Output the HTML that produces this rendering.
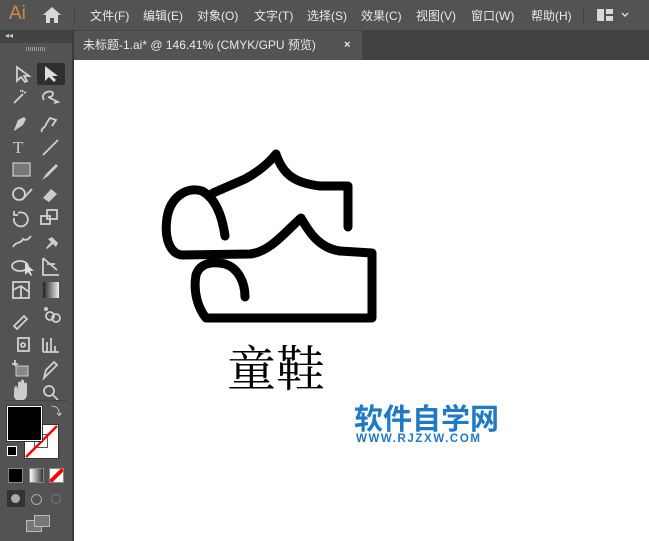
<!DOCTYPE html><html><head><meta charset="utf-8"><style>
body{margin:0;width:649px;height:541px;overflow:hidden;background:#fff;font-family:"Liberation Sans","Noto Sans CJK SC",sans-serif;position:relative}
.a{position:absolute}
#top{left:0;top:0;width:649px;height:30px;background:#535353}
.m{top:7px;color:#e8e8e8;font-size:12px}
#strip{left:0;top:30px;width:649px;height:30px;background:#424242}
#tab{left:74px;top:31px;width:288px;height:29px;background:#535353;color:#e8e8e8;font-size:12px;line-height:29px}
#panel{left:0;top:30px;width:72px;height:511px;background:#535353;border-right:2px solid #3a3a3a}
#ph{left:0;top:30px;width:72px;height:13px;background:#434343}
.ic{fill:none;stroke:#d0d0d0;stroke-width:1.8}
</style></head><body>
<div class="a" id="top"></div>
<div class="a" style="left:9px;top:3px;color:#d08a4a;font-size:19px">Ai</div>
<svg class="a" style="left:42px;top:6px" width="20" height="18"><path d="M10 1L1 9h3v8h4v-5h4v5h4V9h3z" fill="#d8d8d8"/></svg>
<div class="a" style="left:74px;top:6px;width:1px;height:18px;background:#444"></div>
<div class="a m" style="left:90px">文件(F)</div><div class="a m" style="left:143px">编辑(E)</div><div class="a m" style="left:197px">对象(O)</div><div class="a m" style="left:254px">文字(T)</div><div class="a m" style="left:307px">选择(S)</div><div class="a m" style="left:361px">效果(C)</div><div class="a m" style="left:416px">视图(V)</div><div class="a m" style="left:471px">窗口(W)</div><div class="a m" style="left:531px">帮助(H)</div>
<div class="a" style="left:583px;top:6px;width:1px;height:18px;background:#444"></div>
<svg class="a" style="left:597px;top:8px" width="40" height="14"><rect x="0" y="1" width="7" height="12" fill="#d8d8d8"/><rect x="9" y="1" width="7" height="5" fill="#d8d8d8"/><rect x="9" y="8" width="7" height="5" fill="#d8d8d8"/><path d="M25 5l3 3 3-3" stroke="#d8d8d8" fill="none" stroke-width="1.5"/></svg>
<div class="a" id="strip"></div>
<div class="a" id="tab"><span style="margin-left:9px">未标题-1.ai* @ 146.41% (CMYK/GPU 预览)</span><span class="a" style="left:270px;top:0;font-weight:bold;font-size:11px">×</span></div>
<div class="a" id="panel"></div>
<div class="a" id="ph"><span style="color:#ccc;font-size:8px;position:absolute;left:5px;top:1px">◂◂</span></div>
<div class="a" style="left:26px;top:47px;width:19px;height:4px;background:repeating-linear-gradient(90deg,#999 0 1px,transparent 1px 2px)"></div>
<div class="a" style="left:37px;top:63px;width:28px;height:22px;background:#2f2f2f;border-radius:2px"></div>
<svg class="a" style="left:0;top:60px" width="72" height="400">
<path class="ic" d="M17 7v14l4-4 4 5 2-1-3-5h5z"/><path d="M45 6v15l4-4 5 5 2-2-4-4h6z" fill="#ddd"/>
<path class="ic" d="M14 43l9-9M22 30l1 2M26 32l-2 1M20 31l1 0"/><path class="ic" d="M44 40c-4-6 4-10 8-8 3 2-1 6-4 5l10 5-4 1"/>
<path d="M14 70l4-10 6-3 2 2-3 6-9 6z" fill="#ccc"/><path class="ic" d="M42 72c-2-4 4-4 4-8l4-6 6 2-4 6"/>
<text x="13" y="93" fill="#ccc" font-size="17" font-family="Liberation Serif">T</text><path class="ic" d="M43 95l15-15"/>
<rect x="13" y="103" width="17" height="13" fill="#777" stroke="#ccc" stroke-width="1.2"/><path d="M42 120l4-6 10-10 2 2-10 10z" fill="#ccc"/>
<circle cx="19" cy="134" r="6" class="ic"/><path class="ic" d="M22 140l10-11"/><path d="M43 138l8-9 6 5-8 8z" fill="#ccc"/>
<path class="ic" d="M14 158a7 7 0 1 0 4-5M14 151v4h4"/><rect x="41" y="156" width="9" height="8" class="ic"/><rect x="47" y="150" width="10" height="9" class="ic"/>
<path class="ic" d="M13 187c3-6 8-3 10-8 3 2 6 0 8-3"/><path d="M46 188l5-6-3-3 4-2 6 6-2 4-3-3-6 5z" fill="#ccc"/>
<ellipse cx="20" cy="206" rx="8" ry="5" class="ic"/><path d="M25 203v12l3-3 3 4 1-1-2-4h4z" fill="#ddd"/><path class="ic" d="M43 198v17h16M43 198l14 12M47 204h8"/>
<rect x="13" y="222" width="16" height="16" class="ic"/><path class="ic" d="M13 230l8-4 8 6M21 226v12"/><rect x="43" y="222" width="16" height="16" fill="url(#g)"/>
<path class="ic" d="M14 266l10-10 3 3-10 10z"/><circle cx="46" cy="249" r="2" fill="#ccc"/><circle cx="50" cy="256" r="4" class="ic"/><circle cx="56" cy="258" r="4" class="ic"/>
<rect x="18" y="278" width="11" height="13" class="ic"/><circle cx="23" cy="285" r="2" class="ic"/><path class="ic" d="M43 292v-14M47 292v-10M51 292v-14M55 292v-6M43 292h16"/>
<rect x="16" y="306" width="12" height="10" fill="#888" stroke="#ccc"/><path class="ic" d="M12 304h6M15 300v6"/><path class="ic" d="M44 318l2-8 8-8 3 3-8 8z"/>
<path d="M14 336c0-6 0-10 2-10s2 5 2 5v-8c0-2 3-2 3 0v8-10c0-2 3-2 3 0v10-7c0-2 3-2 3 0v10c0 4-3 7-7 7s-6-3-6-5z" fill="#ccc"/><circle cx="49" cy="331" r="5" class="ic"/><path class="ic" d="M53 335l5 5"/>
<defs><linearGradient id="g"><stop offset="0" stop-color="#222"/><stop offset="1" stop-color="#eee"/></linearGradient></defs>
</svg>
<div class="a" style="left:5px;top:400px;width:62px;height:1px;background:#444"></div>
<div class="a" style="left:24px;top:424px;width:33px;height:33px;background:#fff;border:1px solid #333"><div class="a" style="left:9px;top:9px;width:12px;height:12px;border:1px solid #555;background:#fff"></div><svg class="a" style="left:0;top:0" width="33" height="33"><path d="M1 32L32 1" stroke="red" stroke-width="2.5"/></svg></div>
<div class="a" style="left:7px;top:406px;width:33px;height:33px;background:#000;border:1px solid #fff;outline:1px solid #333"></div>
<div class="a" style="left:51px;top:403px;color:#ddd;font-size:11px">⤵</div>
<div class="a" style="left:7px;top:446px;width:8px;height:8px;border:1px solid #fff;background:#000"></div>
<div class="a" style="left:8px;top:468px;width:13px;height:13px;background:#000;border:1px solid #888"></div>
<div class="a" style="left:29px;top:468px;width:13px;height:13px;background:linear-gradient(90deg,#fff,#333);border:1px solid #888"></div>
<div class="a" style="left:49px;top:468px;width:13px;height:13px;background:linear-gradient(135deg,#fff 40%,red 40% 60%,#fff 60%);border:1px solid #888"></div>
<div class="a" style="left:7px;top:490px;width:18px;height:17px;background:#333"></div>
<div class="a" style="left:11px;top:494px;width:9px;height:9px;border-radius:50%;background:#aaa"></div>
<div class="a" style="left:31px;top:494px;width:9px;height:9px;border-radius:50%;border:1px solid #aaa"></div>
<div class="a" style="left:51px;top:494px;width:8px;height:8px;border-radius:50%;border:1px solid #777"></div>
<div class="a" style="left:26px;top:520px;width:14px;height:10px;border:1px solid #bbb;background:#777"></div>
<div class="a" style="left:34px;top:515px;width:14px;height:10px;border:1px solid #bbb;background:#777"></div>
<svg class="a" style="left:0;top:0" width="649" height="541">
<g fill="none" stroke="#000" stroke-width="9" stroke-linecap="round" stroke-linejoin="round">
<path d="M225 236C222 215 215 198 202 191C186 186 170 198 167 218C164 238 170 254 182 255L250 254C270 252 285 232 301 218C308 230 318 248 340 251L372 253V318H206C198 308 193 292 196 275C200 263 212 261 225 264C238 268 245 282 245 297"/>
<path d="M213 193L245 179C258 172 268 164 276 154C283 175 295 183 320 186L348 186V227"/>
</g>
<text x="227" y="386" font-size="49" font-family="Noto Serif CJK SC,serif" fill="#000">童鞋</text>
<text x="354" y="429" font-size="29" font-weight="bold" font-family="Noto Sans CJK SC,sans-serif" fill="#1e7ac4">软件自学网</text>
<text x="356" y="442" font-size="11.5" font-weight="bold" font-family="Liberation Sans,sans-serif" fill="#1e7ac4" letter-spacing="1.6">WWW.RJZXW.COM</text>
</svg>
</body></html>
